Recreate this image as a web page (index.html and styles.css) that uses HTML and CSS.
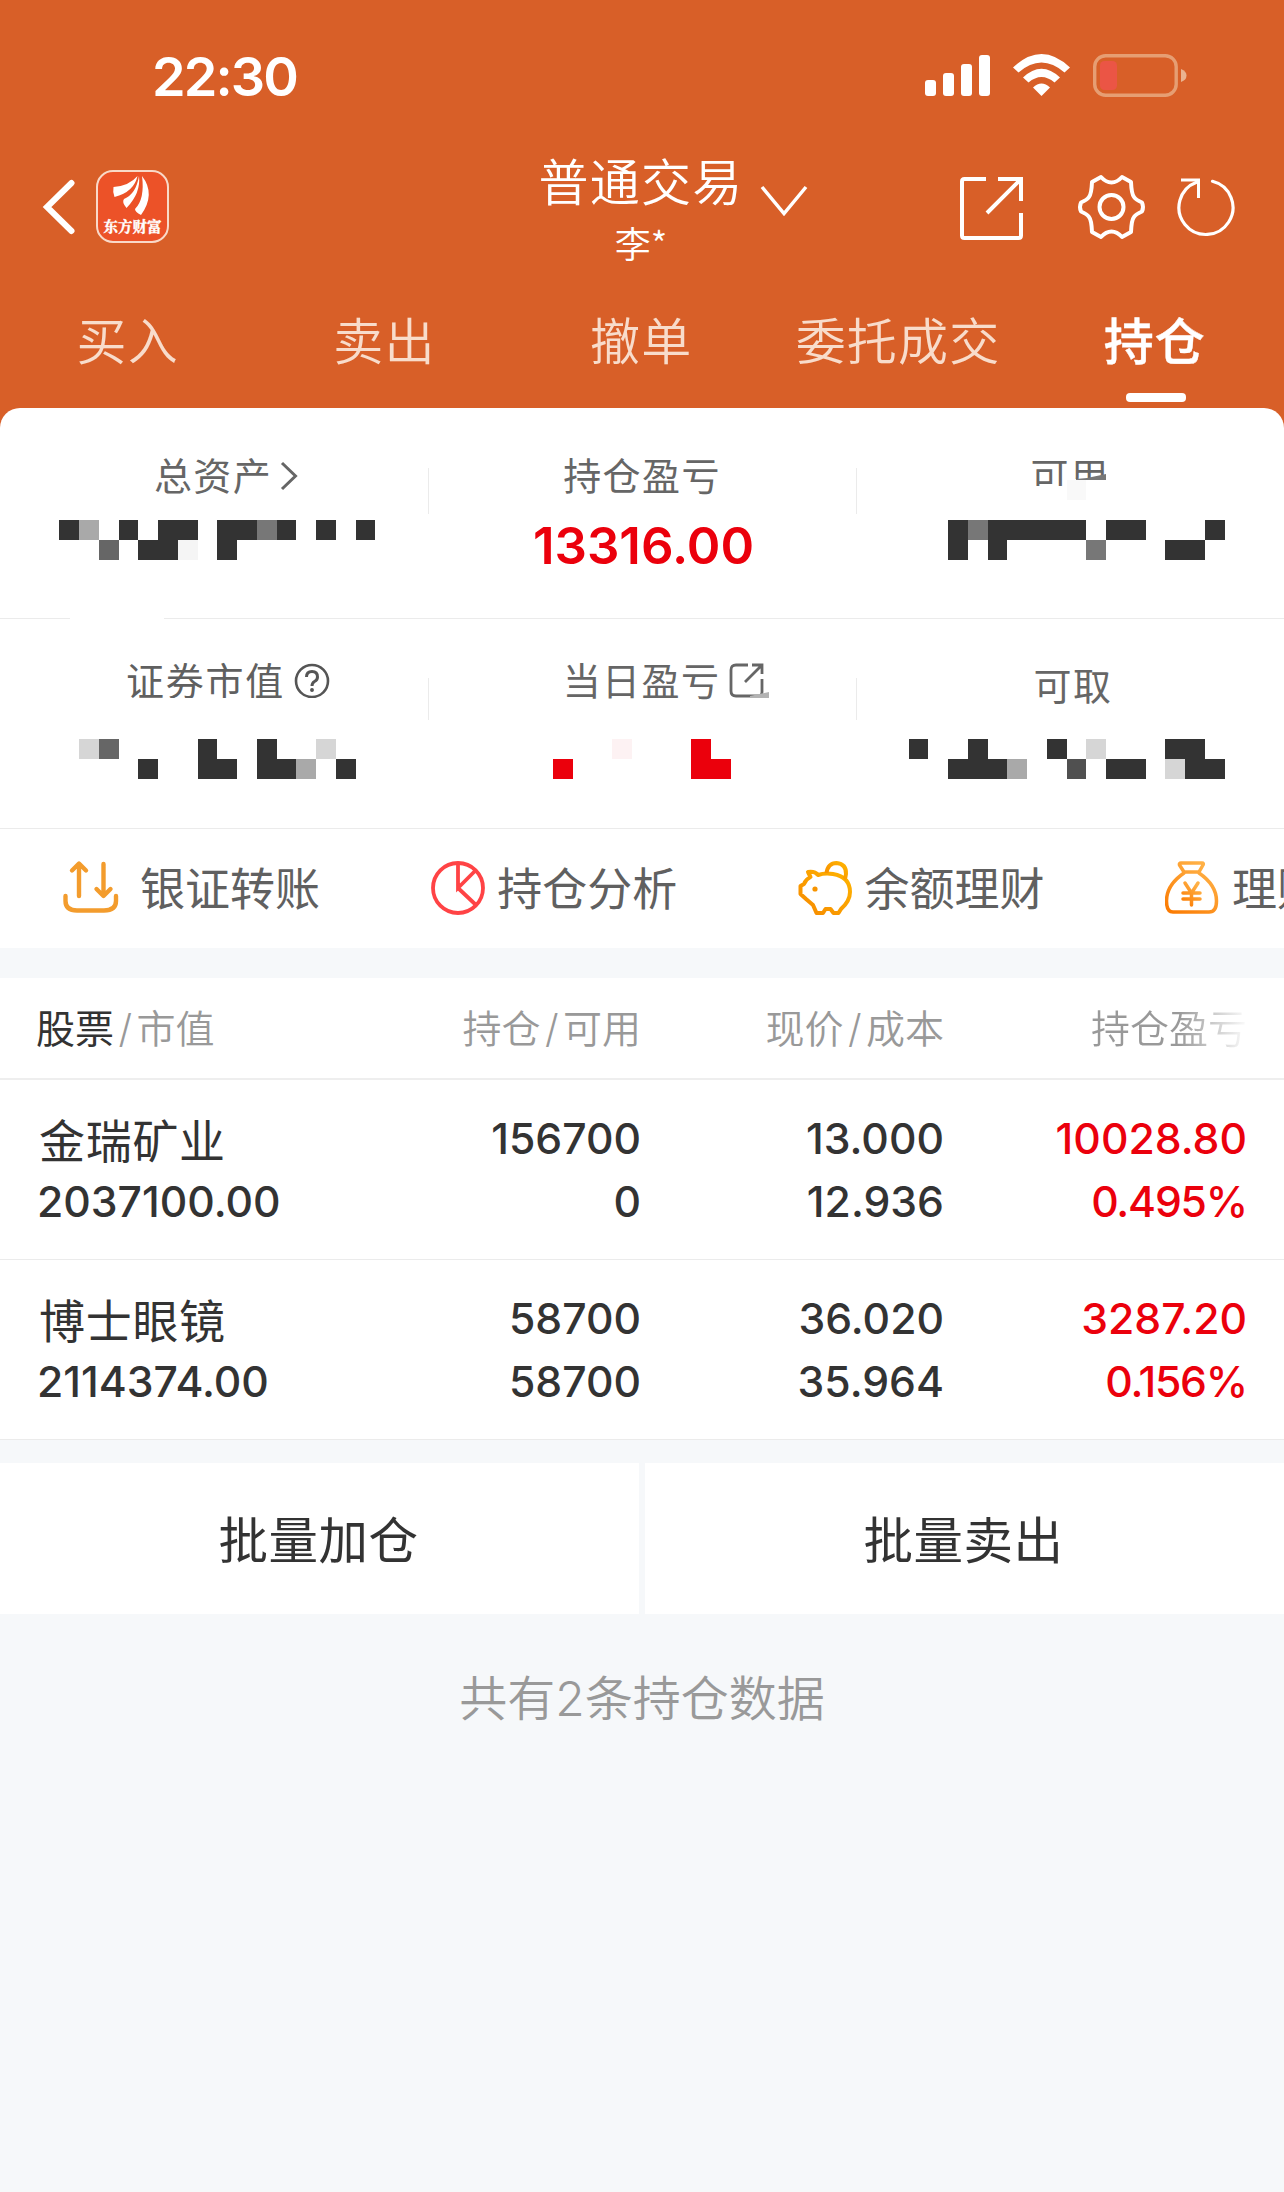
FILE: index.html
```html
<!DOCTYPE html>
<html lang="zh-CN">
<head>
<meta charset="utf-8">
<title>普通交易 - 持仓</title>
<link rel="stylesheet" href="styles.css">
</head>
<body>
<header class="top">
  <div class="status">
    <span class="clock">22:30</span>
    <svg class="status-icons" width="264" height="46" viewBox="0 0 264 46">
      <g fill="#fff">
        <rect x="1" y="28" width="11" height="16" rx="3"/>
        <rect x="19" y="21" width="11" height="23" rx="3"/>
        <rect x="37" y="12" width="11" height="32" rx="3"/>
        <rect x="55" y="3" width="11" height="41" rx="3"/>
        <path d="M89 15.500Q117.500 -11.500 146 15.500L140.500 20.500Q117.500 0.500 94.500 20.500Z"/>
        <path d="M99 25.500Q117.500 8 136 25.500L130.500 30.500Q117.500 19.500 104.500 30.500Z"/>
        <path d="M109 35.500Q117.500 27.500 126 35.500L117.500 44Z"/>
      </g>
      <rect x="170.700" y="3.700" width="81.500" height="39.500" rx="11" fill="none" stroke="#e69e73" stroke-width="3.400"/>
      <rect x="176" y="9" width="17" height="29" rx="4.500" fill="#eb5545"/>
      <path d="M257 17Q262.500 19 262.500 23.500T257 30Z" fill="#eab390"/>
    </svg>
  </div>
  <nav class="bar">
    <div class="bar-left">
      <svg width="34" height="56" viewBox="0 0 34 56"><path d="M29.500 4L5 28L29.500 52" fill="none" stroke="#fff" stroke-width="6" stroke-linecap="round"/></svg>
      <div class="logo">
        <svg width="37" height="40" viewBox="0 0 37 40" fill="#fff">
          <path d="M0.500 11Q16 10 24.500 0Q21 16 1.500 21Q-.5 16 .5 11Z"/>
          <path d="M26 0Q28 17 13.500 32Q8.500 26 11 23Q23 18 26 0Z"/>
          <path d="M29 0Q43 18 28 39Q22 36 22 33Q32 23 29 0Z"/>
        </svg>
        <span>东方财富</span>
      </div>
    </div>
    <div class="title">
      <div class="title-main">普通交易</div>
      <div class="title-sub">李*</div>
    </div>
    <svg class="drop" width="48" height="34" viewBox="0 0 48 34"><path d="M2 3L24 29.500L46 3" fill="none" stroke="#fff" stroke-width="3.500"/></svg>
    <svg class="actions" width="276" height="70" viewBox="0 0 276 70" fill="none" stroke="#fff">
      <path d="M26 7H4.500Q2 7 2 9.500V63.500Q2 66 4.500 66H58.500Q61 66 61 63.500V41M38 7H61V29M61 7L27 41" stroke-width="4"/>
      <g stroke-width="4">
        <circle cx="151.500" cy="35" r="12"/>
        <path d="M141 5L132 10Q131.500 22 129 25Q127 28 121 30.500Q119 35 121 39.500Q127 42 129 45Q131.500 48 132 60L141 65Q146 59.500 151.500 59.500T162 65L171 60Q171.500 48 174 45Q176 42 182 39.500Q184 35 182 30.500Q176 28 174 25Q171.500 22 171 10L162 5Q157 10.500 151.500 10.500T141 5Z" stroke-linejoin="round"/>
      </g>
      <path d="M252.500 9.300A27 27 0 1 1 236.500 10.200" stroke-width="3.200" stroke-linecap="round"/><path d="M221 8H238.500V26" stroke-width="3"/>
    </svg>
  </nav>
  <div class="tabs">
    <span class="tab">买入</span>
    <span class="tab">卖出</span>
    <span class="tab">撤单</span>
    <span class="tab">委托成交</span>
    <span class="tab active">持仓</span>
  </div>
</header>

<main>
<div class="card-wrap">
<section class="summary">
  <div class="stats first">
    <div class="stat">
      <div class="label total">总资产<svg class="more" width="18" height="30" viewBox="0 0 18 30"><path d="M2 2L15.500 15L2 28" fill="none" stroke="#666" stroke-width="3"/></svg></div>
      <svg class="mosaic" width="428" height="40" viewBox="0 0 21.667 2" preserveAspectRatio="none" fill="#333" shape-rendering="crispEdges">
        <path d="M3 0h1v1h-1zM6 0h1v1h-1zM8 0h2v1h-2zM11 0h2v1h-2zM14 0h1v1h-1zM16 0h1v1h-1zM18 0h1v1h-1zM7 1h2v1h-2zM11 1h1v1h-1z"/>
        <path d="M4 0h1v1h-1z" fill="#a9a9a9"/><path d="M13 0h1v1h-1z" fill="#777"/><path d="M5 1h1v1h-1z" fill="#666"/><path d="M9 1h1v1h-1z" fill="#f5f5f5"/>
      </svg>
    </div>
    <div class="stat">
      <div class="label">持仓盈亏</div>
      <div class="amount">13316.00</div>
    </div>
    <div class="stat">
      <div class="label usable"><span class="cut-a">可</span><span class="cut-b">用</span>
        <svg class="shard" width="40" height="46" viewBox="0 0 40 46"><path d="M9 26L9 25L20 24L39 20V26Z" fill="#777"/><path d="M0 26h19v20h-19z" fill="#f9f9f9"/></svg>
      </div>
      <svg class="mosaic" width="428" height="40" viewBox="43.333 0 21.667 2" preserveAspectRatio="none" fill="#333" shape-rendering="crispEdges">
        <path d="M48 0h1v2h-1zM50 0h5v1h-5zM56 0h2v1h-2zM61 0h1v1h-1zM50 1h1v1h-1zM59 1h2v1h-2z"/>
        <path d="M49 0h1v1h-1zM55 1h1v1h-1z" fill="#777"/>
      </svg>
    </div>
  </div>
  <div class="stats second">
    <div class="stat">
      <div class="label clipped">证券市值<svg class="help" width="36" height="36" viewBox="0 0 36 36" fill="none" stroke="#555" stroke-width="2.600"><circle cx="18" cy="18" r="16"/><path d="M12.500 14Q12.500 8.500 18 8.500T23.500 14Q23.500 17 20.500 18.500Q18 20 18 23" stroke-width="3"/><circle cx="18" cy="27" r="1.200" fill="#555" stroke-width="1.500"/></svg></div>
      <svg class="mosaic" width="428" height="40" viewBox="0 0 21.667 2" preserveAspectRatio="none" fill="#333" shape-rendering="crispEdges">
        <path d="M10 0h1v2h-1zM13 0h1v2h-1zM7 1h1v1h-1zM11 1h1v1h-1zM14 1h1v1h-1zM17 1h1v1h-1z"/>
        <path d="M4 0h1v1h-1zM16 0h1v1h-1z" fill="#d6d6d6"/><path d="M5 0h1v1h-1z" fill="#666"/><path d="M15 1h1v1h-1z" fill="#a9a9a9"/>
      </svg>
    </div>
    <div class="stat">
      <div class="label today">当日盈亏<svg class="share" width="42" height="36" viewBox="0 0 42 36" fill="none" stroke="#666" stroke-width="2.800"><path d="M19 2H7Q2 2 2 7V28Q2 33 7 33H29Q33 33 33 29V16M23 2H33V11M33 2L16 19"/><path d="M21 35V33L40 29V35Z" fill="#b3b3b3" stroke="none"/></svg></div>
      <svg class="mosaic" width="428" height="40" viewBox="21.667 0 21.667 2" preserveAspectRatio="none" fill="#eb000c" shape-rendering="crispEdges">
        <path d="M28 1h1v1h-1zM35 0h1v2h-1zM36 1h1v1h-1z"/><path d="M31 0h1v1h-1z" fill="#fdf2f3"/>
      </svg>
    </div>
    <div class="stat">
      <div class="label takeable">可取</div>
      <svg class="mosaic" width="428" height="40" viewBox="43.333 0 21.667 2" preserveAspectRatio="none" fill="#333" shape-rendering="crispEdges">
        <path d="M46 0h1v1h-1zM49 0h1v1h-1zM53 0h1v1h-1zM59 0h2v1h-2zM48 1h3v1h-3zM56 1h2v1h-2zM60 1h2v1h-2z"/>
        <path d="M55 0h1v1h-1zM59 1h1v1h-1z" fill="#d6d6d6"/><path d="M51 1h1v1h-1z" fill="#a9a9a9"/><path d="M54 1h1v1h-1z" fill="#505050"/>
      </svg>
    </div>
  </div>
  <div class="tools">
    <div class="tool transfer">
      <svg width="56" height="56" viewBox="0 0 56 56" fill="none" stroke="#f39c2d" stroke-width="4.400" stroke-linecap="round" stroke-linejoin="round"><path d="M2.500 36V41Q2.500 50.500 14 50.500H41Q53 50.500 53 41V36M16 36V4M9 10.500L16 3.500L23 10.500M40.500 4V35M33.500 29L40.500 36L47.500 29"/></svg>
      <span>银证转账</span>
    </div>
    <div class="tool">
      <svg width="56" height="56" viewBox="0 0 56 56" fill="none" stroke="#ff4345" stroke-width="3.800"><circle cx="28" cy="28" r="25"/><path d="M28 3V28L46 10M28 28L46 45"/></svg>
      <span>持仓分析</span>
    </div>
    <div class="tool">
      <svg width="56" height="56" viewBox="0 0 56 56" fill="none" stroke="url(#gold)" stroke-width="4" stroke-linejoin="round">
        <defs><linearGradient id="gold" x1="0" y1="1" x2="1" y2="0"><stop offset="0" stop-color="#f68a00"/><stop offset="1" stop-color="#ffb400"/></linearGradient></defs>
        <path d="M10 12Q17 11 20 15Q27 12.500 35 14Q52 17 52 32Q52 41 43 49L40.500 53H35.500L32.500 49H27.500L25 53H18.500L15 45L8 39L2.500 34V26L6 24Q8 19 12.500 17Z"/><path d="M28.500 13Q30 3 38.500 3Q48.500 4 48 14Q48 17 46 19"/><circle cx="17" cy="29" r="2.600" fill="#f79400" stroke="none"/>
      </svg>
      <span>余额理财</span>
    </div>
    <div class="tool">
      <svg width="56" height="56" viewBox="0 0 56 56" fill="none" stroke="url(#amber)" stroke-width="3.500" stroke-linejoin="round" stroke-linecap="round">
        <defs><linearGradient id="amber" x1="0" y1="1" x2=".7" y2="0"><stop offset="0" stop-color="#fb7900"/><stop offset="1" stop-color="#ffb146"/></linearGradient></defs>
        <path d="M16 3H37Q39 3 38 5L34 12H19L14.500 5Q14 3 16 3ZM19 13Q1.500 25 1.500 41Q1.500 52 8 52H44Q51.500 52 51.500 41Q51.500 25 34 13"/><path d="M20 23L26.500 33L33 23M18 33H35M18 39H35M26.500 33V45"/>
      </svg>
      <span>理财</span>
    </div>
  </div>
</section>
</div>

<section class="holdings">
  <div class="row head">
    <div class="name"><b>股票</b><i>/</i>市值</div>
    <div>持仓<i>/</i>可用</div>
    <div>现价<i>/</i>成本</div>
    <div class="fade">持仓盈亏</div>
  </div>
  <div class="row">
    <div class="name"><strong>金瑞矿业</strong><span>2037100.00</span></div>
    <div><span>156700</span><span>0</span></div>
    <div><span>13.000</span><span>12.936</span></div>
    <div class="up"><span>10028.80</span><span class="pct">0.495%</span></div>
  </div>
  <div class="row">
    <div class="name"><strong>博士眼镜</strong><span>2114374.00</span></div>
    <div><span>58700</span><span>58700</span></div>
    <div><span>36.020</span><span>35.964</span></div>
    <div class="up"><span>3287.20</span><span class="pct">0.156%</span></div>
  </div>
</section>

<div class="batch">
  <div>批量加仓</div>
  <div>批量卖出</div>
</div>
<p class="count">共有2条持仓数据</p>
</main>
</body>
</html>
```
FILE: styles.css
```css
* { box-sizing: border-box; }
body {
  margin: 0;
  width: 1284px;
  height: 2192px;
  overflow: hidden;
  background: #f6f8fa;
  color: #333;
  font-family: Inter, "Noto Sans CJK SC", sans-serif;
}
svg { display: block; flex: none; }
i { font-style: normal; }

/* header */
.top { height: 408px; background: #d85f28; color: #fff; }
.status {
  height: 150px;
  padding: 52px 96px 0 152px;
  display: flex;
  justify-content: space-between;
}
.clock { font-size: 54px; font-weight: 600; line-height: 50px; letter-spacing: -1.9px; }
.bar { position: relative; height: 142px; display: flex; justify-content: center; }
.bar-left { position: absolute; left: 42px; top: 20px; display: flex; align-items: center; gap: 20px; }
.logo {
  width: 73px;
  height: 73px;
  padding-top: 4px;
  display: flex;
  flex-direction: column;
  align-items: center;
  border: 2px solid #f9d9c8;
  border-radius: 17px;
  background: #ec5228;
}
.logo svg { overflow: visible; margin-right: 2px; }
.logo span {
  margin-top: 1px;
  font: 700 14.5px/18px "Noto Serif CJK SC", "Noto Sans CJK SC", serif;
  -webkit-text-stroke: 0.4px #fff;
  white-space: nowrap;
}
.title { display: flex; flex-direction: column; align-items: center; margin-left: -2px; }
.title-main { font-size: 50px; line-height: 66px; letter-spacing: 1.2px; font-weight: 350; }
.title-sub { font-size: 36px; line-height: 50px; margin-top: 1px; font-family: "Noto Sans CJK SC", sans-serif; font-weight: 350; }
.drop { position: absolute; left: 760px; top: 34px; }
.actions { position: absolute; left: 960px; top: 22px; }
.tabs { display: grid; grid-template-columns: repeat(5, 1fr); height: 116px; }
.tab {
  position: relative;
  text-align: center;
  font-size: 50px;
  letter-spacing: 1.2px;
  text-indent: -1.5px;
  line-height: 101px;
  color: #f8dccb;
  font-weight: 350;
}
.tab.active { color: #fff; font-weight: 500; -webkit-text-stroke: 0.4px #fff; }
.tab.active::after {
  content: "";
  position: absolute;
  left: 99px;
  top: 101px;
  width: 60px;
  height: 9px;
  border-radius: 4px;
  background: #fff;
}

/* account summary */
.card-wrap { background: #d85f28; }
.summary { background: #fff; border-radius: 20px 20px 0 0; height: 540px; overflow: hidden; }
.stats { display: grid; grid-template-columns: repeat(3, 428px); border-bottom: 1px solid #ebebeb; }
.stats.first {
  height: 211px;
  border-bottom: 0;
  background: linear-gradient(90deg, #ebebeb 70px, #fff 70px 164px, #ebebeb 164px) bottom / 100% 1px no-repeat;
}
.stats.second { height: 210px; }
.stat { position: relative; padding-top: 48px; }
.second .stat { padding-top: 42px; }
.stat + .stat::before {
  content: "";
  position: absolute;
  left: 0;
  top: 60px;
  width: 1px;
  height: 46px;
  background: #ebebeb;
}
.second .stat + .stat::before { top: 59px; height: 42px; }
.label {
  position: relative;
  height: 40px;
  display: flex;
  justify-content: center;
  align-items: center;
  font-size: 38px;
  letter-spacing: 1.4px;
  color: #666;
  line-height: 40px;
}
.more { margin-left: 8px; }
.help, .share { margin-left: 9px; }
.share { margin-right: -6px; }
.total { left: 12px; }
.today { left: 22px; }
.clipped { left: 14px; letter-spacing: 1.8px; color: #606060; clip-path: inset(0 0 3px 0); }
.usable { left: 0; }
.cut-a { clip-path: inset(0 0 10px 0); }
.cut-b { clip-path: inset(0 0 17px 0); }
.shard { position: absolute; left: 211px; top: -2px; }
.takeable { top: 5px; left: 3px; }
.mosaic { margin-top: 24px; }
.second .mosaic { margin-top: 38px; }
.amount {
  margin-top: 20px;
  padding-left: 3px;
  text-align: center;
  font-size: 51px;
  font-weight: 600;
  line-height: 60px;
  color: #eb000c;
}
.tools { height: 119px; display: flex; align-items: center; padding-left: 63px; }
.tool { width: 367.300px; flex: none; display: flex; align-items: center; gap: 11px; font-size: 45px; line-height: 60px; color: #606060; }
.tool svg { margin-top: -1px; }
.tool.transfer { gap: 21px; }
.tool span { margin-top: 2px; white-space: nowrap; }

/* holdings */
.holdings { margin-top: 30px; background: #fff; }
.row {
  display: grid;
  grid-template-columns: 300px 304px 303px 303px;
  height: 180px;
  padding: 27px 37px 0 37px;
  border-bottom: 1px solid #ebebeb;
  font-size: 42.700px;
  font-weight: 500;
}
.row > div { display: flex; flex-direction: column; align-items: flex-end; }
.row > .name { align-items: flex-start; }
.row span { line-height: 63px; }
.row strong { font-size: 46px; font-weight: 400; letter-spacing: 0.7px; line-height: 63px; margin-left: 2px; position: relative; top: 3px; }
.row .up { color: #eb000c; }
.row .pct { letter-spacing: -1.200px; }
.row.head {
  height: 102px;
  padding-top: 21px;
  border-bottom: 2px solid #eee;
  font-size: 39px;
  font-weight: 350;
  line-height: 60px;
  color: #999;
}
.row.head > div { flex-direction: row; justify-content: flex-end; align-items: flex-start; }
.row.head > .name { justify-content: flex-start; margin-left: -1px; }
.row.head b { font-weight: 400; color: #333; }
.row.head i { padding: 0 4.500px; }
.row.head .fade { color: transparent; background: linear-gradient(90deg, #999 235px, #fff 305px); background-clip: text; -webkit-background-clip: text; }

.batch { margin-top: 23px; display: grid; grid-template-columns: 1fr 1fr; gap: 6px; height: 151px; }
.batch div { background: #fff; text-align: center; text-indent: -2px; font-size: 49.500px; letter-spacing: 0.500px; line-height: 157px; height: 151px; }
.count { margin: 0; padding-top: 50px; text-align: center; font-size: 48px; line-height: 70px; color: #999; font-weight: 350; }
```
